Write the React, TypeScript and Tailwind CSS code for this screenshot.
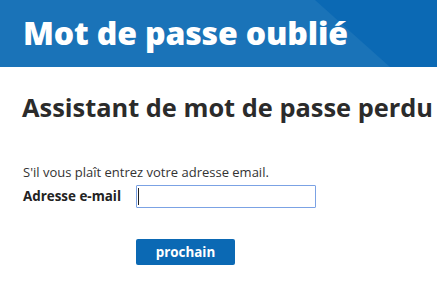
import React from "react";

export default function App() {
  return (
    <div className="w-[437px] h-[298px] bg-white overflow-hidden" style={{ fontFamily: "'Open Sans', 'Noto Sans', sans-serif" }}>
      <header className="relative h-[67px] bg-[#1a73b8] overflow-hidden">
        <div className="absolute inset-0 bg-[#0b69b4] [clip-path:polygon(315px_0,100%_0,100%_100%,390px_100%)]" />
        <h1 className="relative pl-[23px] pt-[13px] text-[32px] leading-[40px] font-extrabold text-white tracking-[-0.15px]">
          Mot de passe oublié
        </h1>
      </header>
      <main className="pl-[23px] text-[#333]">
        <h2 className="-ml-px mt-[24px] text-[25.4px] leading-[32px] font-bold text-[#2b2b2b]">Assistant de mot de passe perdu</h2>
        <p className="mt-[41px] text-[13px] leading-[16px] text-[#333]">S'il vous plaît entrez votre adresse email.</p>
        <div className="mt-[5px] flex items-center">
          <label className="w-[113px] text-[13.4px] leading-[19.5px] font-bold text-[#222]">Adresse e-mail</label>
          <div className="w-[180px] h-[23px] border border-[#7ba2e4] rounded-[1px] flex items-center pl-px">
            <span className="w-px h-[17px] bg-[#222]" />
          </div>
        </div>
        <div className="mt-[31px] pl-[113px]">
          <button className="w-[99px] h-[26px] bg-[#0b69b4] rounded-[2px] text-white text-[13.4px] font-bold">prochain</button>
        </div>
      </main>
    </div>
  );
}
